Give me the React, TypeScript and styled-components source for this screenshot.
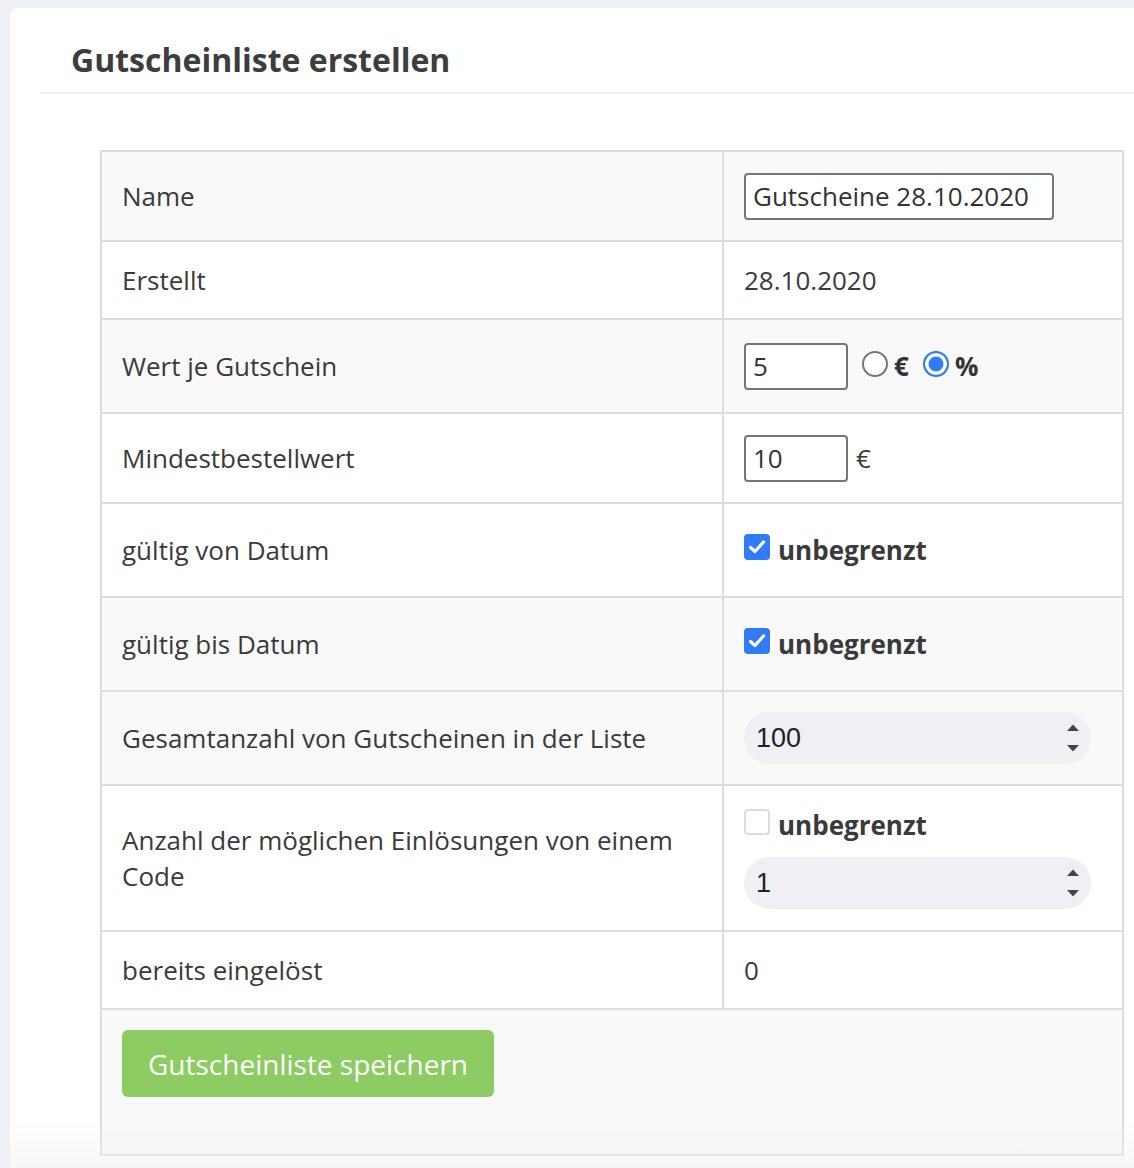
import React from "react";
import styled, { createGlobalStyle } from "styled-components";

const GlobalStyle = createGlobalStyle`
  html, body { margin: 0; padding: 0; }
  body {
    background: #eff0f5;
    font-family: "Open Sans", "Noto Sans", sans-serif;
    color: #3a3a3a;
  }
`;

const Page = styled.div`
  padding: 8px 0 0 10px;
  min-height: 1160px;
  position: relative;
`;

const Card = styled.div`
  background: #ffffff;
  border-radius: 8px 0 0 0;
  min-height: 1160px;
`;

const Header = styled.div`
  margin-left: 30px;
  padding: 28px 31px 8px;
  border-bottom: 2px solid #eef0f3;
`;

const Title = styled.h1`
  margin: 0;
  font-size: 32px;
  line-height: 48px;
  font-weight: 700;
  color: #3d3d3d;
`;

const Body = styled.div`
  padding: 56px 10px 0 90px;
`;

const Table = styled.table`
  width: 1024px;
  border-collapse: collapse;
  table-layout: fixed;
  border: 2px solid #dddddd;
`;

const Row = styled.tr<{ $h: number; $striped?: boolean }>`
  height: ${(p) => p.$h}px;
  background: ${(p) => (p.$striped ? "#f9f9f9" : "#ffffff")};
`;

const Cell = styled.td<{ $top?: boolean }>`
  border: 2px solid #dddddd;
  padding: 0 20px;
  vertical-align: ${(p) => (p.$top ? "top" : "middle")};
  font-size: 26px;
  line-height: 36px;
  color: #3a3a3a;
`;

const TextInput = styled.input<{ $w: number }>`
  box-sizing: border-box;
  width: ${(p) => p.$w}px;
  height: 47px;
  border: 2px solid #767676;
  border-radius: 4px;
  padding: 0 7px;
  font-family: "Open Sans", sans-serif;
  font-size: 26px;
  color: #333;
  background: #fff;
  outline: none;
  vertical-align: middle;
`;

const InlineGroup = styled.div<{ $gap: number }>`
  display: flex;
  align-items: center;
  gap: ${(p) => p.$gap}px;
`;

const RadioLabel = styled.label`
  display: inline-flex;
  align-items: center;
  gap: 6px;
  font-weight: 700;
  font-size: 26px;
  color: #333;
`;

const RadioDot = styled.span<{ $checked?: boolean }>`
  box-sizing: border-box;
  width: 26px;
  height: 26px;
  border-radius: 50%;
  border: ${(p) => (p.$checked ? "2.5px solid #2f7cf6" : "2px solid #767676")};
  background: ${(p) => (p.$checked ? "#2f7cf6" : "#fff")};
  box-shadow: ${(p) => (p.$checked ? "inset 0 0 0 3.5px #fff" : "none")};
  margin-top: -4px;
`;

const CheckLabel = styled.label`
  display: flex;
  align-items: center;
  gap: 8px;
  font-weight: 700;
  font-size: 26px;
  line-height: 36px;
  color: #3a3a3a;
`;

const CheckBox = styled.span<{ $checked?: boolean }>`
  box-sizing: border-box;
  width: 26px;
  height: 26px;
  border-radius: 4px;
  border: ${(p) => (p.$checked ? "none" : "2px solid #dcdcdc")};
  background: ${(p) => (p.$checked ? "#2f7cf6" : "#fff")};
  display: inline-flex;
  align-items: center;
  justify-content: center;
  margin-top: -6px;
`;

const Stack = styled.div`
  display: flex;
  flex-direction: column;
  gap: 14px;
`;

const Pill = styled.div`
  box-sizing: border-box;
  width: 347px;
  height: 52px;
  border-radius: 26px;
  background: #eff0f4;
  display: flex;
  align-items: center;
  padding: 0 10px 0 12px;
`;

const PillValue = styled.span`
  flex: 1;
  font-family: "Liberation Sans", Arial, sans-serif;
  font-size: 27px;
  color: #222;
`;

const Button = styled.button`
  margin-top: 20px;
  height: 67px;
  padding: 0 26px;
  border: none;
  border-radius: 6px;
  background: #8dcb63;
  color: #fff;
  font-family: "Open Sans", sans-serif;
  font-size: 28px;
  cursor: pointer;
`;

const Fade = styled.div`
  position: absolute;
  left: 0;
  right: 0;
  bottom: 0;
  height: 50px;
  background: linear-gradient(rgba(240, 240, 244, 0), rgba(240, 240, 244, 0.55));
  pointer-events: none;
`;

const Check = () => (
  <svg width="18" height="16" viewBox="0 0 18 16">
    <path d="M2.5 8.5 L7 12.5 L15.5 3" fill="none" stroke="#fff" strokeWidth="3.2" strokeLinecap="round" strokeLinejoin="round" />
  </svg>
);

const Spinner = () => (
  <svg width="16" height="36" viewBox="0 0 16 36">
    <path d="M2 11 L8 4.5 L14 11 Z" fill="#444" />
    <path d="M2 25 L8 31.5 L14 25 Z" fill="#444" />
  </svg>
);

export default function App() {
  return (
    <>
      <GlobalStyle />
      <Page>
        <Card>
          <Header>
            <Title>Gutscheinliste erstellen</Title>
          </Header>
          <Body>
            <Table>
              <colgroup>
                <col style={{ width: 622 }} />
                <col />
              </colgroup>
              <tbody>
                <Row $h={90} $striped>
                  <Cell>Name</Cell>
                  <Cell>
                    <TextInput $w={310} defaultValue="Gutscheine 28.10.2020" />
                  </Cell>
                </Row>
                <Row $h={78}>
                  <Cell>Erstellt</Cell>
                  <Cell>28.10.2020</Cell>
                </Row>
                <Row $h={94} $striped>
                  <Cell>Wert je Gutschein</Cell>
                  <Cell>
                    <InlineGroup $gap={14}>
                      <TextInput $w={104} defaultValue="5" />
                      <RadioLabel>
                        <RadioDot />€
                      </RadioLabel>
                      <RadioLabel>
                        <RadioDot $checked />%
                      </RadioLabel>
                    </InlineGroup>
                  </Cell>
                </Row>
                <Row $h={90}>
                  <Cell>Mindestbestellwert</Cell>
                  <Cell>
                    <InlineGroup $gap={8}>
                      <TextInput $w={104} defaultValue="10" />
                      <span>€</span>
                    </InlineGroup>
                  </Cell>
                </Row>
                <Row $h={94}>
                  <Cell>gültig von Datum</Cell>
                  <Cell>
                    <CheckLabel>
                      <CheckBox $checked>
                        <Check />
                      </CheckBox>
                      unbegrenzt
                    </CheckLabel>
                  </Cell>
                </Row>
                <Row $h={94} $striped>
                  <Cell>gültig bis Datum</Cell>
                  <Cell>
                    <CheckLabel>
                      <CheckBox $checked>
                        <Check />
                      </CheckBox>
                      unbegrenzt
                    </CheckLabel>
                  </Cell>
                </Row>
                <Row $h={94} $striped>
                  <Cell>Gesamtanzahl von Gutscheinen in der Liste</Cell>
                  <Cell>
                    <Pill>
                      <PillValue>100</PillValue>
                      <Spinner />
                    </Pill>
                  </Cell>
                </Row>
                <Row $h={146}>
                  <Cell>Anzahl der möglichen Einlösungen von einem Code</Cell>
                  <Cell>
                    <Stack>
                      <CheckLabel>
                        <CheckBox />
                        unbegrenzt
                      </CheckLabel>
                      <Pill>
                        <PillValue>1</PillValue>
                        <Spinner />
                      </Pill>
                    </Stack>
                  </Cell>
                </Row>
                <Row $h={78}>
                  <Cell>bereits eingelöst</Cell>
                  <Cell>0</Cell>
                </Row>
                <Row $h={146} $striped>
                  <Cell colSpan={2} $top>
                    <Button>Gutscheinliste speichern</Button>
                  </Cell>
                </Row>
              </tbody>
            </Table>
          </Body>
        </Card>
        <Fade />
      </Page>
    </>
  );
}
